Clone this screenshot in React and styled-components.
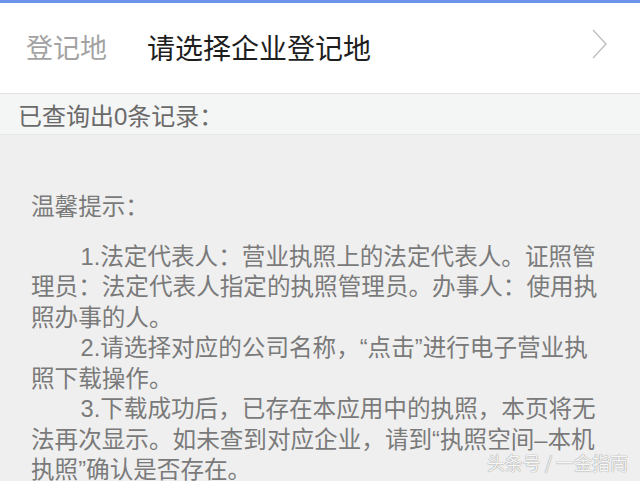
import React from "react";
import styled, { createGlobalStyle } from "styled-components";

const Global = createGlobalStyle`
  body {
    margin: 0;
    background: #efefef;
    font-family: "Liberation Sans", "Noto Sans CJK SC", sans-serif;
  }
`;

const Page = styled.div`
  position: relative;
  width: 640px;
  height: 481px;
  overflow: hidden;
  background: #efefef;
  border-top: 3px solid #6b93ec;
  box-sizing: border-box;
`;

const Header = styled.div`
  display: flex;
  align-items: center;
  height: 91px;
  padding: 0 32px 0 26px;
  background: #fff;
  border-bottom: 1px solid #e2e2e2;
  box-sizing: border-box;
`;

const Label = styled.span`
  font-size: 27px;
  color: #a3a3a3;
  width: 121px;
  margin-top: -3px;
`;

const Value = styled.span`
  flex: 1;
  font-size: 28px;
  color: #1e1e1e;
  margin-top: -3px;
`;

const Chevron = styled.svg`
  width: 16px;
  height: 30px;
  margin-top: -8px;
`;

const ResultBar = styled.div`
  height: 40px;
  padding-left: 18px;
  display: flex;
  align-items: center;
  background: #f4f5f5;
  border-bottom: 1px solid #e6e6e6;
  font-size: 24px;
  color: #6a6a6a;
`;

const Tips = styled.div`
  padding: 57px 36px 0 31px;
  color: #7a7a7a;
  font-size: 23.6px;
  line-height: 30.5px;
`;

const TipTitle = styled.div`
  margin-bottom: 19px;
`;

const Para = styled.p`
  margin: 0;
  text-indent: 2.1em;
`;

const Watermark = styled.div`
  position: absolute;
  right: 12px;
  bottom: 6px;
  font-size: 18px;
  font-family: "Noto Sans CJK SC", sans-serif;
  color: #f6f6f6;
  text-shadow: 0 0 1px #9a9a9a, 0 0 1px #9a9a9a;
`;

export default function App() {
  return (
    <>
      <Global />
      <Page>
        <Header>
          <Label>登记地</Label>
          <Value>请选择企业登记地</Value>
          <Chevron viewBox="0 0 16 30">
            <polyline points="1,1 14,15 1,29" fill="none" stroke="#c2c2c2" strokeWidth="1.5" />
          </Chevron>
        </Header>
        <ResultBar>已查询出0条记录：</ResultBar>
        <Tips>
          <TipTitle>温馨提示：</TipTitle>
          <Para>1.法定代表人：营业执照上的法定代表人。证照管理员：法定代表人指定的执照管理员。办事人：使用执照办事的人。</Para>
          <Para>2.请选择对应的公司名称，“点击”进行电子营业执照下载操作。</Para>
          <Para>3.下载成功后，已存在本应用中的执照，本页将无法再次显示。如未查到对应企业，请到“执照空间–本机执照”确认是否存在。</Para>
        </Tips>
        <Watermark>头条号 / 一金指南</Watermark>
      </Page>
    </>
  );
}
